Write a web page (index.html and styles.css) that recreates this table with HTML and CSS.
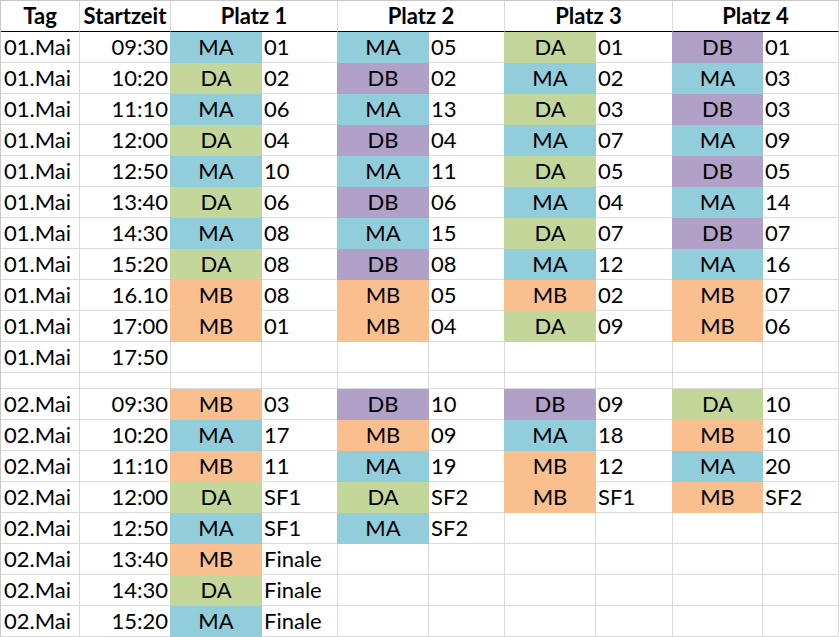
FILE: index.html
```html
<!DOCTYPE html>
<html lang="de">
<head>
<meta charset="utf-8">
<title>Spielplan</title>
<link rel="stylesheet" href="styles.css">
</head>
<body>
<div class="sheet">
  <div class="row head">
    <div class="c hd">Tag</div>
    <div class="c hd">Startzeit</div>
    <div class="c hd span2">Platz 1</div>
    <div class="c hd span2">Platz 2</div>
    <div class="c hd span2">Platz 3</div>
    <div class="c hd span2">Platz 4</div>
  </div>

  <div class="row"><div class="c day">01.Mai</div><div class="c time">09:30</div><div class="c t ma">MA</div><div class="c n">01</div><div class="c t ma">MA</div><div class="c n">05</div><div class="c t da">DA</div><div class="c n">01</div><div class="c t db">DB</div><div class="c n">01</div></div>
  <div class="row"><div class="c day">01.Mai</div><div class="c time">10:20</div><div class="c t da">DA</div><div class="c n">02</div><div class="c t db">DB</div><div class="c n">02</div><div class="c t ma">MA</div><div class="c n">02</div><div class="c t ma">MA</div><div class="c n">03</div></div>
  <div class="row"><div class="c day">01.Mai</div><div class="c time">11:10</div><div class="c t ma">MA</div><div class="c n">06</div><div class="c t ma">MA</div><div class="c n">13</div><div class="c t da">DA</div><div class="c n">03</div><div class="c t db">DB</div><div class="c n">03</div></div>
  <div class="row"><div class="c day">01.Mai</div><div class="c time">12:00</div><div class="c t da">DA</div><div class="c n">04</div><div class="c t db">DB</div><div class="c n">04</div><div class="c t ma">MA</div><div class="c n">07</div><div class="c t ma">MA</div><div class="c n">09</div></div>
  <div class="row"><div class="c day">01.Mai</div><div class="c time">12:50</div><div class="c t ma">MA</div><div class="c n">10</div><div class="c t ma">MA</div><div class="c n">11</div><div class="c t da">DA</div><div class="c n">05</div><div class="c t db">DB</div><div class="c n">05</div></div>
  <div class="row"><div class="c day">01.Mai</div><div class="c time">13:40</div><div class="c t da">DA</div><div class="c n">06</div><div class="c t db">DB</div><div class="c n">06</div><div class="c t ma">MA</div><div class="c n">04</div><div class="c t ma">MA</div><div class="c n">14</div></div>
  <div class="row"><div class="c day">01.Mai</div><div class="c time">14:30</div><div class="c t ma">MA</div><div class="c n">08</div><div class="c t ma">MA</div><div class="c n">15</div><div class="c t da">DA</div><div class="c n">07</div><div class="c t db">DB</div><div class="c n">07</div></div>
  <div class="row"><div class="c day">01.Mai</div><div class="c time">15:20</div><div class="c t da">DA</div><div class="c n">08</div><div class="c t db">DB</div><div class="c n">08</div><div class="c t ma">MA</div><div class="c n">12</div><div class="c t ma">MA</div><div class="c n">16</div></div>
  <div class="row"><div class="c day">01.Mai</div><div class="c time">16.10</div><div class="c t mb">MB</div><div class="c n">08</div><div class="c t mb">MB</div><div class="c n">05</div><div class="c t mb">MB</div><div class="c n">02</div><div class="c t mb">MB</div><div class="c n">07</div></div>
  <div class="row"><div class="c day">01.Mai</div><div class="c time">17:00</div><div class="c t mb">MB</div><div class="c n">01</div><div class="c t mb">MB</div><div class="c n">04</div><div class="c t da">DA</div><div class="c n">09</div><div class="c t mb">MB</div><div class="c n">06</div></div>
  <div class="row"><div class="c day">01.Mai</div><div class="c time">17:50</div><div class="c"></div><div class="c"></div><div class="c"></div><div class="c"></div><div class="c"></div><div class="c"></div><div class="c"></div><div class="c"></div></div>

  <div class="row gap"><div class="c"></div><div class="c"></div><div class="c"></div><div class="c"></div><div class="c"></div><div class="c"></div><div class="c"></div><div class="c"></div><div class="c"></div><div class="c"></div></div>

  <div class="row"><div class="c day">02.Mai</div><div class="c time">09:30</div><div class="c t mb">MB</div><div class="c n">03</div><div class="c t db">DB</div><div class="c n">10</div><div class="c t db">DB</div><div class="c n">09</div><div class="c t da">DA</div><div class="c n">10</div></div>
  <div class="row"><div class="c day">02.Mai</div><div class="c time">10:20</div><div class="c t ma">MA</div><div class="c n">17</div><div class="c t mb">MB</div><div class="c n">09</div><div class="c t ma">MA</div><div class="c n">18</div><div class="c t mb">MB</div><div class="c n">10</div></div>
  <div class="row"><div class="c day">02.Mai</div><div class="c time">11:10</div><div class="c t mb">MB</div><div class="c n">11</div><div class="c t ma">MA</div><div class="c n">19</div><div class="c t mb">MB</div><div class="c n">12</div><div class="c t ma">MA</div><div class="c n">20</div></div>
  <div class="row"><div class="c day">02.Mai</div><div class="c time">12:00</div><div class="c t da">DA</div><div class="c n">SF1</div><div class="c t da">DA</div><div class="c n">SF2</div><div class="c t mb">MB</div><div class="c n">SF1</div><div class="c t mb">MB</div><div class="c n">SF2</div></div>
  <div class="row"><div class="c day">02.Mai</div><div class="c time">12:50</div><div class="c t ma">MA</div><div class="c n">SF1</div><div class="c t ma">MA</div><div class="c n">SF2</div><div class="c"></div><div class="c"></div><div class="c"></div><div class="c"></div></div>
  <div class="row"><div class="c day">02.Mai</div><div class="c time">13:40</div><div class="c t mb">MB</div><div class="c n">Finale</div><div class="c"></div><div class="c"></div><div class="c"></div><div class="c"></div><div class="c"></div><div class="c"></div></div>
  <div class="row"><div class="c day">02.Mai</div><div class="c time">14:30</div><div class="c t da">DA</div><div class="c n">Finale</div><div class="c"></div><div class="c"></div><div class="c"></div><div class="c"></div><div class="c"></div><div class="c"></div></div>
  <div class="row"><div class="c day">02.Mai</div><div class="c time">15:20</div><div class="c t ma">MA</div><div class="c n">Finale</div><div class="c"></div><div class="c"></div><div class="c"></div><div class="c"></div><div class="c"></div><div class="c"></div></div>
</div>
</body>
</html>
```

FILE: styles.css
```css
html, body {
  margin: 0;
  padding: 0;
  background: #ffffff;
}

.sheet {
  width: 838px;
  border-left: 1px solid #c8c8c8;
  border-top: 1px solid #c8c8c8;
  font-family: Lato, "Open Sans", "Liberation Sans", sans-serif;
  font-size: 22px;
  color: #000;
}

.row {
  display: grid;
  grid-template-columns: 79px 91px 91px 76px 91px 76px 91px 77px 90px 76px;
  height: 31px;
}

.row.gap {
  height: 16px;
}

.c {
  box-sizing: border-box;
  border-right: 1px solid #dadada;
  border-bottom: 1px solid #dadada;
  line-height: 30px;
  white-space: nowrap;
  overflow: hidden;
}

.head .c {
  border-bottom: 1px solid #000;
}

.hd {
  font-weight: bold;
  text-align: center;
}

.span2 {
  grid-column: span 2;
}

.day {
  padding-left: 3px;
}

.time {
  text-align: right;
  padding-right: 2px;
}

.t {
  text-align: center;
  overflow: visible;
}

.n {
  padding-left: 2px;
}

.ma { background: #92cddc; border-color: #92cddc; box-shadow: -1px 0 0 #92cddc; }
.da { background: #c4d79b; border-color: #c4d79b; box-shadow: -1px 0 0 #c4d79b; }
.db { background: #b1a0c7; border-color: #b1a0c7; box-shadow: -1px 0 0 #b1a0c7; }
.mb { background: #fabf8f; border-color: #fabf8f; box-shadow: -1px 0 0 #fabf8f; }
```
